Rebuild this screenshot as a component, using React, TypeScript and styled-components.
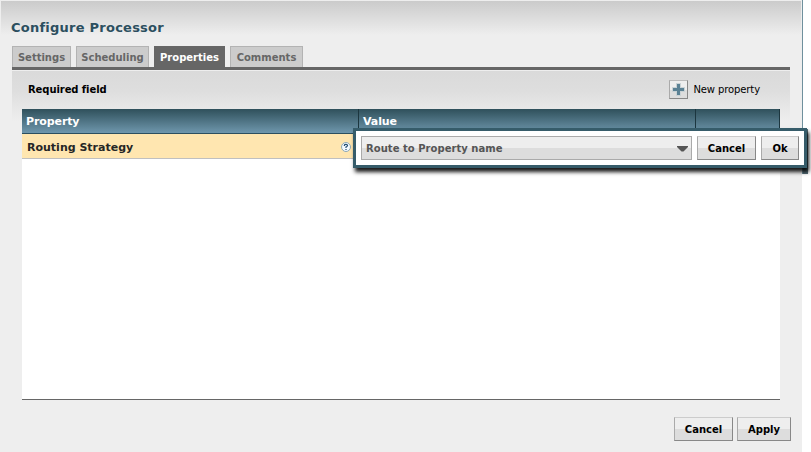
import React from "react";
import styled, { createGlobalStyle } from "styled-components";

const GlobalStyle = createGlobalStyle`
  * { box-sizing: border-box; }
  body { margin: 0; background: #fff; font-family: "DejaVu Sans", Verdana, sans-serif; overflow: hidden; }
`;

const Page = styled.div`
  display: flex;
  width: 811px;
  height: 452px;
`;

const Dialog = styled.div`
  position: relative;
  display: flex;
  flex-direction: column;
  width: 802px;
  height: 452px;
  padding: 18px 11px 0 11px;
  border: solid #eee;
  border-width: 1px 1px 0 1px;
  background: linear-gradient(#cbcbcb, #eee 34px);
  background-color: #eee;
`;

const CanvasEdge = styled.div`
  width: 6px;
  height: 174px;
  border-left: 1px solid #6f909d;
  background: linear-gradient(#57707a, #57707a) bottom / 100% 45px no-repeat;
`;

const Title = styled.h1`
  margin: 0 0 9px -1px;
  height: 18px;
  font-size: 13px;
  line-height: 18px;
  letter-spacing: 0.24px;
  color: #2c4f5f;
  white-space: nowrap;
`;

const Tabs = styled.div`
  display: flex;
  gap: 5px;
  height: 24px;
  border-bottom: 3px solid #666;
`;

const Tab = styled.div<{ $active?: boolean; $width: number }>`
  width: ${(p) => p.$width}px;
  height: 21px;
  border: 1px solid ${(p) => (p.$active ? "#666" : "#b3b3b3")};
  border-bottom: 0;
  background: ${(p) => (p.$active ? "#666" : "#ccc")};
  color: ${(p) => (p.$active ? "#fff" : "#666")};
  font-size: 10px;
  font-weight: bold;
  line-height: 22px;
  text-align: center;
  white-space: nowrap;
`;

const Panel = styled.div`
  display: flex;
  flex-direction: column;
  height: 330px;
  padding: 0 10px;
  border-top: 1px solid #eee;
  background: linear-gradient(#dadada, #dedede 20px, #eee 50px);
`;

const Toolbar = styled.div`
  display: flex;
  align-items: center;
  justify-content: space-between;
  height: 38px;
  padding: 0 20px 0 6px;
  font-size: 10px;
`;

const Required = styled.b`
  line-height: 14px;
  letter-spacing: -0.08px;
`;

const AddProperty = styled.div`
  display: flex;
  align-items: center;
  gap: 5px;
  margin-bottom: 1px;
  letter-spacing: -0.1px;
`;

const AddButton = styled.button`
  display: flex;
  width: 19px;
  height: 19px;
  padding: 2px;
  border: 1px solid #aaa;
  border-color: #bbb #888 #888 #aaa;
  background: linear-gradient(#eee 50%, #ddd 50%);
`;

const Table = styled.div`
  flex: 1;
  background: #fff;
  border-bottom: 1px solid #666;
`;

const HeaderRow = styled.div`
  display: grid;
  grid-template-columns: 337px 337px 84px;
  height: 25px;
  border-bottom: 1px solid #2c4f5f;
  background: linear-gradient(#2f505b, #6f97ad);
`;

const HeaderCell = styled.div`
  height: 24px;
  padding-left: 4px;
  border-right: 1px solid #1c363f;
  color: #fff;
  font-size: 11px;
  font-weight: bold;
  line-height: 25px;
  letter-spacing: -0.1px;
`;

const PropertyCell = styled.div`
  display: flex;
  align-items: center;
  justify-content: space-between;
  width: 337px;
  height: 25px;
  padding: 1px 8px 0 5px;
  border-bottom: 1px solid #c0c0c0;
  background: #ffe6b0;
  color: #262626;
  font-size: 11px;
  font-weight: bold;
`;

const PropertyName = styled.span`
  padding-top: 2px;
`;

const Editor = styled.div`
  position: absolute;
  left: 352px;
  top: 127px;
  display: flex;
  gap: 5px;
  width: 454px;
  height: 40px;
  padding: 5px;
  border: 3px solid #365c6a;
  background: #fff;
  box-shadow: 2px 4px 4px rgba(0, 0, 0, 0.9);
`;

const Button = styled.button<{ $width: number }>`
  width: ${(p) => p.$width}px;
  height: 24px;
  padding: 0;
  border: 1px solid;
  border-color: #ccc #888 #888 #aaa;
  background: linear-gradient(#eee 50%, #ddd 50%);
  color: #000;
  font: bold 10px "DejaVu Sans", Verdana, sans-serif;
`;

const Combo = styled.div`
  display: flex;
  align-items: center;
  justify-content: space-between;
  width: 331px;
  height: 24px;
  padding: 0 3px 0 4px;
  border: 1px solid #aaa;
  background: linear-gradient(#eee 50%, #ddd 50%);
  color: #555;
  font-size: 10px;
  font-weight: bold;
  letter-spacing: 0.04px;
`;

const Footer = styled.div`
  display: flex;
  justify-content: flex-end;
  gap: 4px;
  margin-top: 17px;
  margin-right: -1px;
`;

const PlusIcon = () => (
  <svg width="13" height="13" viewBox="0 0 13 13">
    <path d="M4 0h5v4h4v5H9v4H4V9H0V4h4z" fill="#c9d2d5" />
    <path d="M5 1h3v4h4v3H8v4H5V8H1V5h4z" fill="#5b8194" />
  </svg>
);

const HelpIcon = () => (
  <svg width="10" height="10" viewBox="0 0 10 10">
    <circle cx="5" cy="5" r="4.5" fill="#f4faff" stroke="#8ba7b5" />
    <path d="M3.4 4V3.2Q3.6 2.3 5 2.3T6.6 3.5Q6.6 4.3 5 5V6M5 7v1" fill="none" stroke="#244c70" strokeWidth="1.2" />
  </svg>
);

const ArrowIcon = () => (
  <svg width="11" height="8" viewBox="0 -2 11 8">
    <path d="M0 0h11v1L6.5 5.5h-2L0 1z" fill="#555" />
  </svg>
);

export default function App() {
  return (
    <Page>
      <GlobalStyle />
      <Dialog>
        <Title>Configure Processor</Title>
        <Tabs>
          <Tab $width={59}>Settings</Tab>
          <Tab $width={73}>Scheduling</Tab>
          <Tab $width={71} $active>Properties</Tab>
          <Tab $width={73}>Comments</Tab>
        </Tabs>
        <Panel>
          <Toolbar>
            <Required>Required field</Required>
            <AddProperty>
              <AddButton aria-label="New property"><PlusIcon /></AddButton>
              <span>New property</span>
            </AddProperty>
          </Toolbar>
          <Table>
            <HeaderRow>
              <HeaderCell>Property</HeaderCell>
              <HeaderCell>Value</HeaderCell>
              <HeaderCell />
            </HeaderRow>
            <PropertyCell>
              <PropertyName>Routing Strategy</PropertyName>
              <HelpIcon />
            </PropertyCell>
          </Table>
        </Panel>
        <Footer>
          <Button $width={59}>Cancel</Button>
          <Button $width={54}>Apply</Button>
        </Footer>
        <Editor>
          <Combo>
            <span>Route to Property name</span>
            <ArrowIcon />
          </Combo>
          <Button $width={59}>Cancel</Button>
          <Button $width={38}>Ok</Button>
        </Editor>
      </Dialog>
      <CanvasEdge />
    </Page>
  );
}
